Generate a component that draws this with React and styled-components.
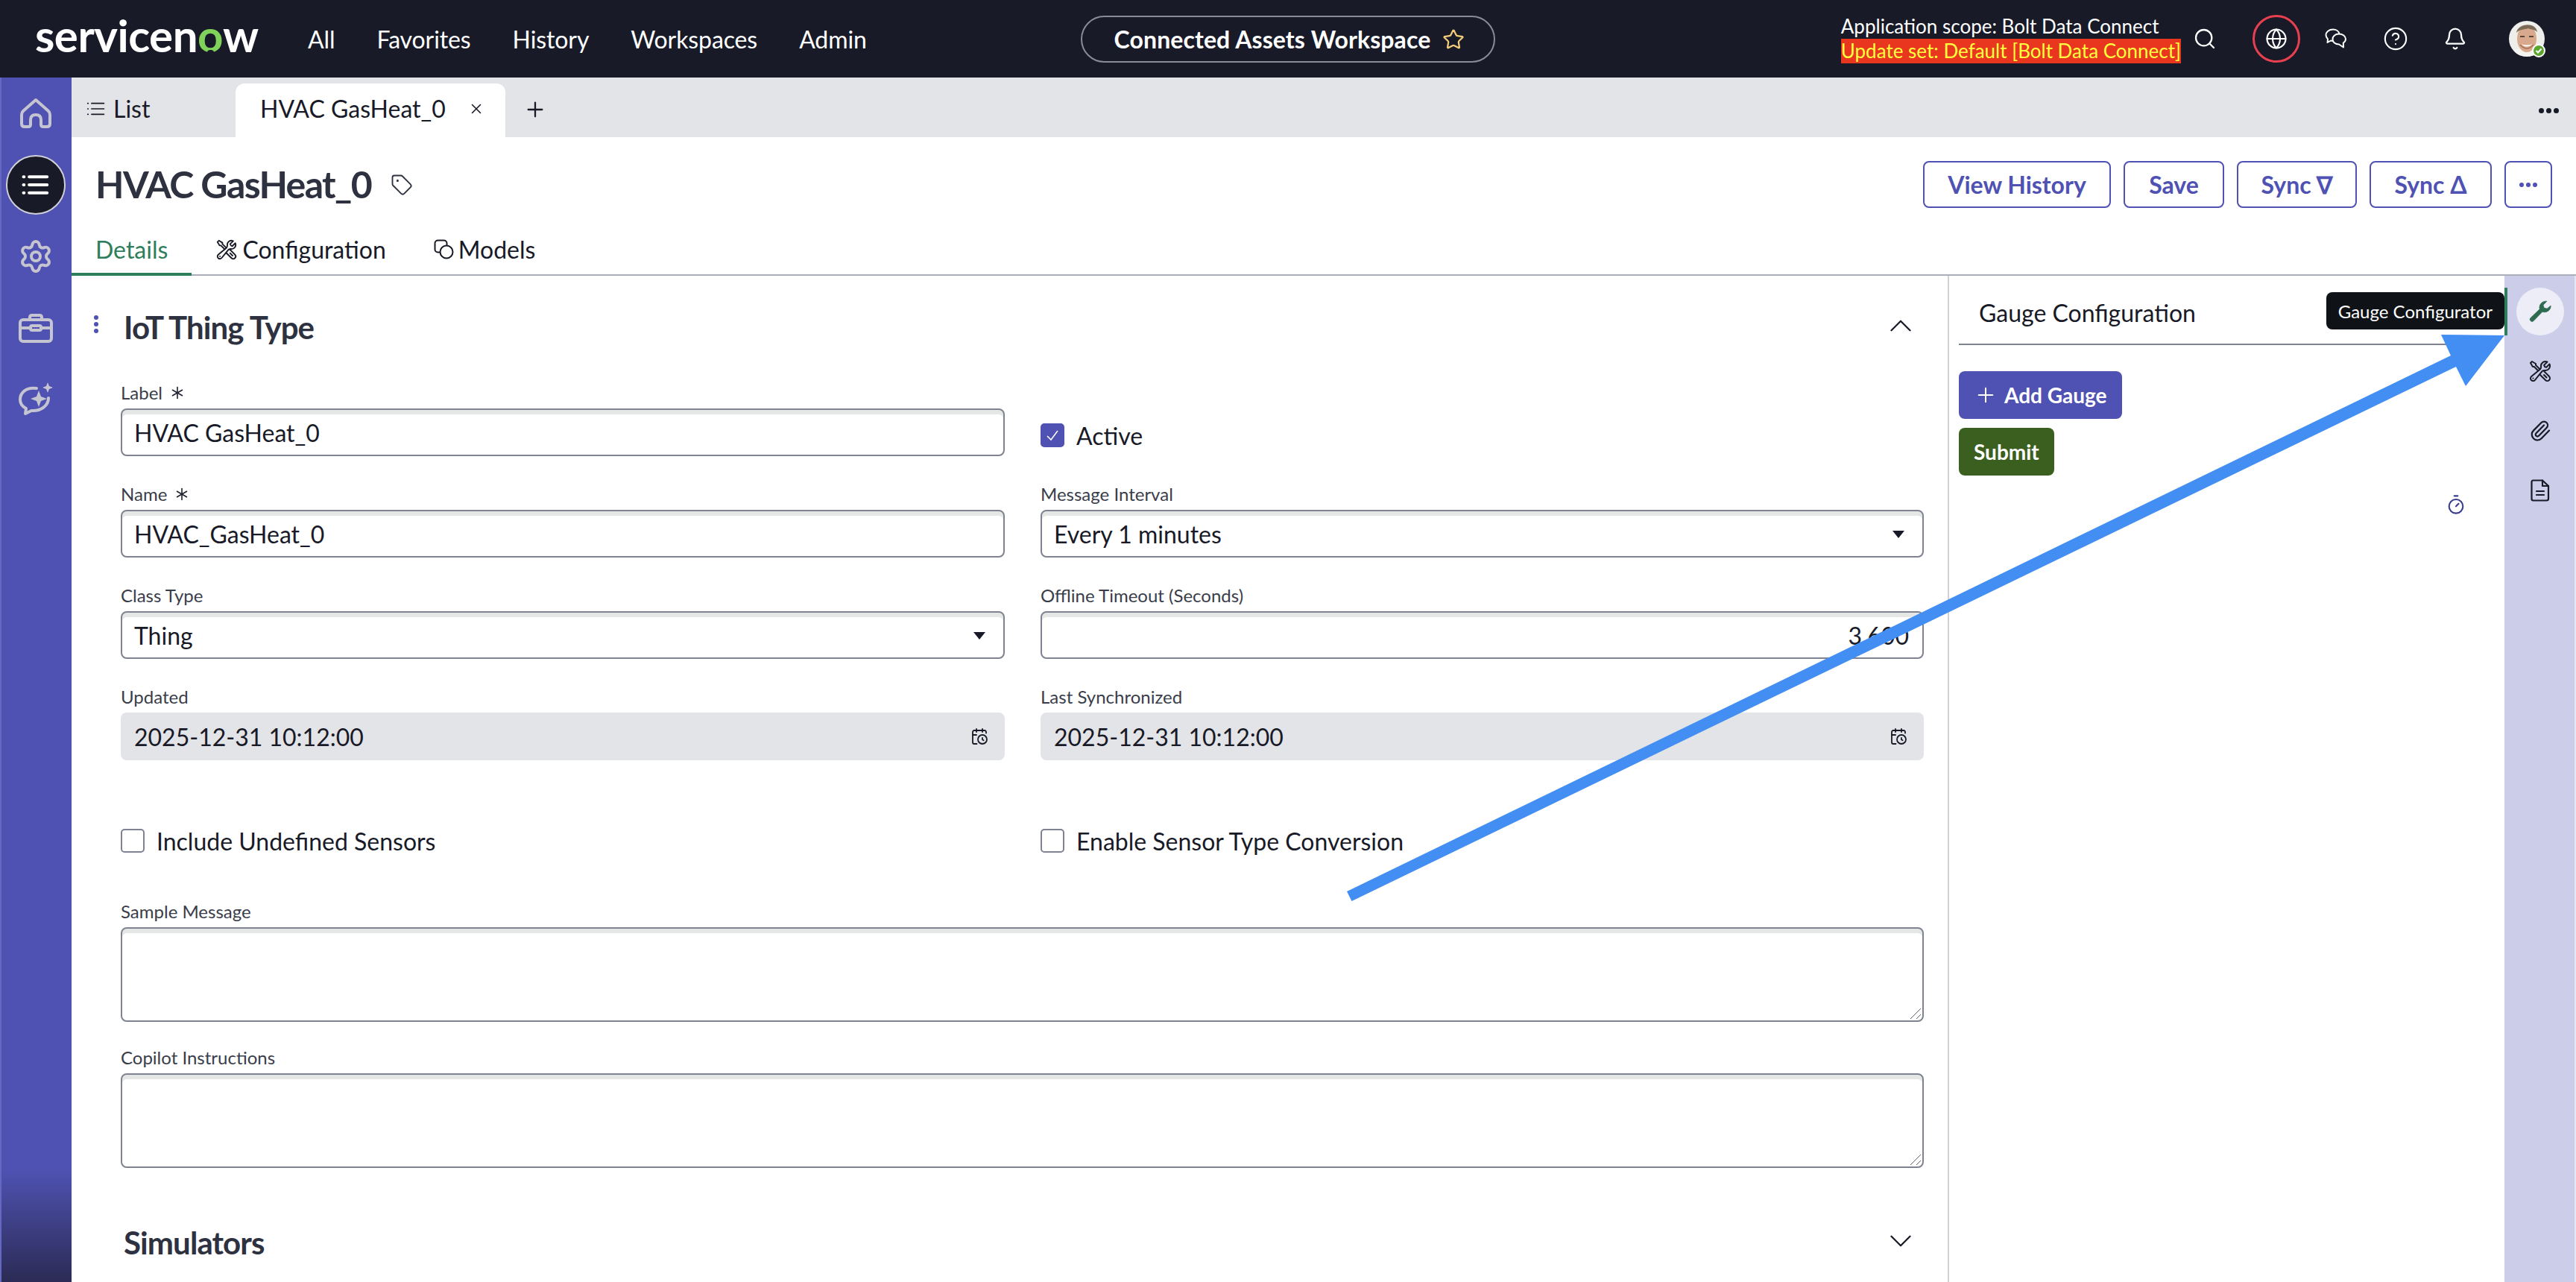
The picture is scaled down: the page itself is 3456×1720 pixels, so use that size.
import React from 'react';
import styled, { createGlobalStyle } from 'styled-components';
import {
  Asterisk,
  Bell,
  CalendarClock,
  ChevronDown,
  ChevronUp,
  CircleHelp,
  Globe,
  Paperclip,
  Plus,
  Search,
  Settings,
  Star,
  Tag,
  Timer,
  X,
} from 'lucide-react';
import { HiOutlineWrenchScrewdriver } from 'react-icons/hi2';

const GlobalStyle = createGlobalStyle`
  html, body {
    margin: 0;
    padding: 0;
    background: #fff;
    overflow: hidden;
  }
  * {
    box-sizing: border-box;
  }
  body, input, textarea, button {
    font-family: Lato, "Open Sans", sans-serif;
  }
`;

const Page = styled.div`
  position: relative;
  width: 100%;
  height: 100vh;
  display: flex;
  flex-direction: column;
  overflow: hidden;
`;

const TopBar = styled.header`
  height: 104px;
  flex: none;
  background: #181a27;
  color: #fff;
  display: grid;
  grid-template-columns: 1fr auto 1fr;
  align-items: center;
`;

const LeftGroup = styled.div`
  display: flex;
  align-items: center;
  padding-left: 47px;
`;

const Logo = styled.div`
  font-size: 60px;
  font-weight: 700;
  letter-spacing: -0.5px;
  line-height: 60px;
  width: 296px;
  margin-right: 70px;
  margin-top: -11px;
  white-space: nowrap;
`;

const LogoO = styled.span`
  position: relative;
  color: #7fd35a;

  &::after {
    content: '';
    position: absolute;
    left: 50%;
    bottom: 10px;
    width: 9px;
    height: 6px;
    margin-left: -4px;
    background: #181a27;
    border-radius: 4px 4px 0 0;
  }
`;

const Nav = styled.nav`
  display: flex;
  gap: 56px;
  font-size: 32px;
  letter-spacing: -0.1px;
`;

const WorkspacePill = styled.div`
  width: 556px;
  height: 63px;
  margin-top: 1px;
  padding-left: 4px;
  border: 2px solid #8a8b96;
  border-radius: 32px;
  display: flex;
  align-items: center;
  justify-content: center;
  gap: 16px;
  font-size: 32px;
  font-weight: 700;
  letter-spacing: 0.1px;
  color: #fff;

  svg {
    color: #f5cd79;
  }
`;

const RightGroup = styled.div`
  display: flex;
  align-items: center;
  justify-content: flex-end;
  gap: 16px;
  padding-right: 34px;
`;

const ScopeBlock = styled.div`
  display: flex;
  flex-direction: column;
  margin-right: -16px;
  font-size: 26px;
  line-height: 33px;
  white-space: nowrap;
`;

const UpdateSet = styled.span`
  background: #e8361f;
  color: #ffff3f;
`;

const IconButton = styled.div`
  width: 64px;
  height: 64px;
  flex: none;
  display: flex;
  align-items: center;
  justify-content: center;
  border-radius: 50%;
  margin-left: ${props => (props.$spaced ? '16px' : '0')};
  border: ${props => (props.$ring ? '3px solid #e8404f' : 'none')};
`;

const AvatarWrap = styled.div`
  position: relative;
  width: 48px;
  height: 48px;
  margin: 0 8px 0 24px;
`;

const AvatarBadge = styled.span`
  position: absolute;
  right: -1px;
  bottom: -1px;
  width: 18px;
  height: 18px;
  border-radius: 50%;
  background: #5aa62e;
  border: 2px solid #fff;
  display: flex;
  align-items: center;
  justify-content: center;
`;

const Body = styled.div`
  flex: 1;
  min-height: 0;
  display: flex;
`;

const SideNav = styled.aside`
  width: 96px;
  flex: none;
  background: linear-gradient(to bottom, #4f52b2 0, #4f52b2 1465px, #2b2b55 1616px);
  border-left: 2px solid #6568c0;
  display: flex;
  flex-direction: column;
  align-items: center;
  padding-top: 8px;
  color: #c4c5d0;
`;

const SideItem = styled.div`
  width: 80px;
  height: 80px;
  margin-bottom: 16px;
  margin-left: -2px;
  border-radius: 50%;
  display: flex;
  align-items: center;
  justify-content: center;
  background: ${props => (props.$active ? '#181a27' : 'transparent')};
  border: ${props => (props.$active ? '2px solid #cfd0d8' : 'none')};
  color: ${props => (props.$active ? '#fff' : '#c4c5d0')};
`;

const Main = styled.div`
  flex: 1;
  min-width: 0;
  display: flex;
  flex-direction: column;
`;

const TabBar = styled.div`
  height: 80px;
  flex: none;
  background: #e3e4e8;
  display: flex;
  align-items: flex-end;
  color: #181a27;
  font-size: 32px;
`;

const ListTab = styled.div`
  width: 220px;
  height: 80px;
  padding: 3px 0 0 20px;
  display: flex;
  align-items: center;
  gap: 10px;
`;

const OpenTab = styled.div`
  width: 362px;
  height: 72px;
  padding: 0 28px 5px 33px;
  background: #fff;
  border-radius: 12px 12px 0 0;
  display: flex;
  align-items: center;
  justify-content: space-between;
  white-space: nowrap;
`;

const AddTab = styled.div`
  height: 80px;
  margin-left: 24px;
  padding-top: 6px;
  display: flex;
  align-items: center;
`;

const TabBarMore = styled.div`
  margin-left: auto;
  height: 80px;
  padding: 8px 23px 0 0;
  display: flex;
  align-items: center;
  gap: 3px;
`;

const Dot = styled.i`
  width: ${props => props.$size || 7}px;
  height: ${props => props.$size || 7}px;
  border-radius: 50%;
  background: currentColor;
  display: block;
`;

const RecordHead = styled.div`
  height: 186px;
  flex: none;
  padding-top: 32px;
  display: flex;
  flex-direction: column;
`;

const TitleRow = styled.div`
  height: 63px;
  padding: 0 32px;
  display: flex;
  align-items: center;
  justify-content: space-between;
`;

const TitleWrap = styled.div`
  display: flex;
  align-items: center;
  gap: 26px;
  color: #2e3240;
`;

const Title = styled.h1`
  margin: 0;
  font-size: 50px;
  font-weight: 700;
  letter-spacing: -1.6px;
  line-height: 63px;
  color: #2e3240;
`;

const Actions = styled.div`
  display: flex;
  gap: 17px;
`;

const ActionButton = styled.button`
  width: ${props => props.$width}px;
  height: 63px;
  padding: 0;
  background: #fff;
  border: 2px solid #4f52b2;
  border-radius: 8px;
  color: #4f52b2;
  font-size: 32px;
  font-weight: 700;
  display: flex;
  align-items: center;
  justify-content: center;
  gap: 3px;
`;

const TabsRow = styled.div`
  height: 64px;
  margin-top: 27px;
  display: flex;
  border-bottom: 2px solid #abadb8;
`;

const Tab = styled.div`
  height: 64px;
  padding: 0 32px 3px;
  display: flex;
  align-items: center;
  gap: 6px;
  font-size: 32px;
  color: ${props => (props.$active ? '#2e7d5b' : '#181a27')};
  border-bottom: 4px solid ${props => (props.$active ? '#2e7d5b' : 'transparent')};
`;

const Content = styled.div`
  flex: 1;
  min-height: 0;
  display: flex;
`;

const FormColumn = styled.section`
  width: 2519px;
  flex: none;
  padding: 0 34px 0 66px;
  border-right: 2px solid #d0d1d6;
  overflow: hidden;
`;

const SectionHead = styled.div`
  position: relative;
  height: ${props => props.$height}px;
  display: flex;
  align-items: center;
  justify-content: space-between;
  color: #181a27;
`;

const SectionTitle = styled.h2`
  margin: 0 0 0 4px;
  font-size: 42px;
  font-weight: 700;
  letter-spacing: -0.9px;
  color: #2e3240;
`;

const DragHandle = styled.div`
  position: absolute;
  left: -36px;
  top: 53px;
  display: flex;
  flex-direction: column;
  gap: 3px;
  color: #4f52b2;
`;

const ChevronWrap = styled.div`
  width: 50px;
  height: 50px;
  margin-right: 4px;
  margin-top: -4px;
`;

const FieldGrid = styled.div`
  display: grid;
  grid-template-columns: 1186px 1185px;
  column-gap: 48px;
  grid-auto-rows: 136px;
`;

const Field = styled.div`
  display: flex;
  flex-direction: column;
`;

const FieldLabel = styled.label`
  height: 40px;
  padding-bottom: 3px;
  display: flex;
  align-items: center;
  gap: 5px;
  font-size: 24px;
  color: #3a3d4a;

  svg {
    color: #1f2230;
  }
`;

const TextInput = styled.input`
  width: 100%;
  height: 64px;
  padding: 1px 18px 0 16px;
  border: 2px solid #7f8290;
  border-radius: 8px;
  box-shadow: inset 0 6px 0 #e5e7e6;
  background: #fff;
  color: #181a27;
  font-size: 32px;
  text-align: ${props => (props.$right ? 'right' : 'left')};
  outline: none;
`;

const SelectBox = styled.div`
  height: 64px;
  padding: 1px 24px 0 16px;
  border: 2px solid #7f8290;
  border-radius: 8px;
  box-shadow: inset 0 6px 0 #e5e7e6;
  display: flex;
  align-items: center;
  justify-content: space-between;
  color: #181a27;
  font-size: 32px;
`;

const Caret = styled.i`
  width: 0;
  height: 0;
  border-left: 8px solid transparent;
  border-right: 8px solid transparent;
  border-top: 10px solid #181a27;
  display: block;
`;

const ReadOnlyBox = styled.div`
  height: 64px;
  padding: 0 22px 0 18px;
  border-radius: 8px;
  background: #e3e4e8;
  display: flex;
  align-items: center;
  justify-content: space-between;
  color: #181a27;
  font-size: 32px;
`;

const CheckRow = styled.div`
  display: flex;
  align-items: center;
  gap: 16px;
  height: 64px;
  margin-top: ${props => props.$top || 0}px;
  font-size: 32px;
  color: #181a27;
`;

const CheckBox = styled.span`
  width: 32px;
  height: 32px;
  flex: none;
  border-radius: 5px;
  display: flex;
  align-items: center;
  justify-content: center;
  background: ${props => (props.$checked ? '#4f52b2' : '#fff')};
  border: 2px solid ${props => (props.$checked ? '#4f52b2' : '#7f8290')};
`;

const WideRow = styled.div`
  display: grid;
  grid-template-columns: 1186px 1185px;
  column-gap: 48px;
  margin-top: 44px;
`;

const WideField = styled.div`
  width: 2419px;
  display: flex;
  flex-direction: column;
  margin-top: ${props => props.$top}px;
`;

const LongTextWrap = styled.div`
  position: relative;
  height: 127px;
`;

const LongText = styled.textarea`
  display: block;
  width: 100%;
  height: 127px;
  padding: 8px 16px;
  border: 2px solid #7f8290;
  border-radius: 8px;
  box-shadow: inset 0 6px 0 #e5e7e6;
  background: #fff;
  outline: none;
  resize: none;
`;

const ResizeGrip = styled.svg`
  position: absolute;
  right: 3px;
  bottom: 3px;
  width: 16px;
  height: 16px;
  pointer-events: none;
`;

const GaugePanel = styled.section`
  width: 745px;
  flex: none;
  padding: 0 16px 0 13px;
  display: flex;
  flex-direction: column;
  align-items: flex-start;
`;

const GaugeHead = styled.div`
  width: 100%;
  height: 93px;
  flex: none;
  padding: 8px 0 0 27px;
  border-bottom: 2px solid #7f8290;
  display: flex;
  align-items: center;
  font-size: 32px;
  color: #181a27;
`;

const FilledButton = styled.button`
  height: 64px;
  padding: 0 ${props => props.$pad}px;
  margin-top: ${props => props.$top}px;
  border: none;
  border-radius: 8px;
  background: ${props => props.$bg};
  color: #fff;
  font-size: 28px;
  font-weight: 700;
  display: flex;
  align-items: center;
  gap: 9px;
`;

const TimerRow = styled.div`
  width: 100%;
  margin-top: 25px;
  padding-right: 35px;
  display: flex;
  justify-content: flex-end;
  color: #3b3d8f;
`;

const Rail = styled.aside`
  position: relative;
  width: 96px;
  flex: none;
  padding-top: 16px;
  display: flex;
  flex-direction: column;
  align-items: center;
  gap: 16px;
  background: #cccde8;
  border-right: 2px solid #e6e6f3;
  color: #181a27;
`;

const RailItem = styled.div`
  width: 64px;
  height: 64px;
  border-radius: 50%;
  display: flex;
  align-items: center;
  justify-content: center;
  margin-right: -2px;
  background: ${props => (props.$active ? '#ecedf7' : 'transparent')};
  color: ${props => (props.$active ? '#2d6a4f' : '#181a27')};
`;

const RailMark = styled.span`
  position: absolute;
  left: 0;
  top: 16px;
  width: 4px;
  height: 64px;
  background: #2e7d5b;
`;

const Tooltip = styled.div`
  position: absolute;
  right: 100%;
  top: 22px;
  height: 50px;
  padding: 0 16px;
  border-radius: 8px;
  background: #0f1217;
  color: #fff;
  font-size: 24px;
  display: flex;
  align-items: center;
  white-space: nowrap;
`;

const ArrowOverlay = styled.svg`
  position: absolute;
  left: 0;
  top: 0;
  width: 3456px;
  height: 1720px;
  pointer-events: none;
`;

const navItems = ['All', 'Favorites', 'History', 'Workspaces', 'Admin'];

const leftFields = [
  { label: 'Label', required: true, value: 'HVAC GasHeat_0' },
  { label: 'Name', required: true, value: 'HVAC_GasHeat_0' },
  { label: 'Class Type', select: true, value: 'Thing' },
  { label: 'Updated', date: true, value: '2025-12-31 10:12:00' },
];

const rightFields = [
  { active: true },
  { label: 'Message Interval', select: true, value: 'Every 1 minutes' },
  { label: 'Offline Timeout (Seconds)', right: true, value: '3,600' },
  { label: 'Last Synchronized', date: true, value: '2025-12-31 10:12:00' },
];

function HomeIcon() {
  return (
    <svg width="42" height="42" viewBox="0 0 42 42" fill="none" stroke="currentColor" strokeWidth="4" strokeLinejoin="round">
      <path d="M21 3 L38 18 Q40 20 40 23 V35 Q40 39 36 39 H31 Q28 39 28 36 V30 Q28 23 21 23 Q14 23 14 30 V36 Q14 39 11 39 H6 Q2 39 2 35 V23 Q2 20 4 18 Z" />
    </svg>
  );
}

function ListLines({ size = 30, weight = 2.4 }) {
  return (
    <svg width={size} height={size} viewBox="0 0 30 30" stroke="currentColor" strokeWidth={weight} strokeLinecap="round">
      <path d="M8 6.5H27M8 15H27M8 23.5H27" />
      <path d="M2 6.5H2.6M2 15H2.6M2 23.5H2.6" />
    </svg>
  );
}

function BriefcaseIcon() {
  return (
    <svg width="46" height="40" viewBox="0 0 46 40" fill="none" stroke="currentColor" strokeWidth="4" strokeLinejoin="round">
      <rect x="2" y="9" width="42" height="29" rx="4" />
      <path d="M15 9V6Q15 3 18 3H28Q31 3 31 6V9" />
      <path d="M2 20H16M30 20H44" />
      <rect x="16" y="17" width="14" height="6" rx="2" />
    </svg>
  );
}

function CopilotIcon() {
  return (
    <svg width="46" height="46" viewBox="0 0 46 46" fill="none" stroke="currentColor" strokeWidth="4" strokeLinecap="round" strokeLinejoin="round">
      <path d="M24 8 C10 6 2 14 2 23 C2 29 6 33 10 35 L9 42 L17 38 C30 39 40 31 40 21" />
      <path fill="currentColor" stroke="none" d="M27 11 L30 19 L38 22 L30 25 L27 33 L24 25 L16 22 L24 19 Z" />
      <path fill="currentColor" stroke="none" d="M39 0 L41 5 L46 7 L41 9 L39 14 L37 9 L32 7 L37 5 Z" />
    </svg>
  );
}

function ChatIcon() {
  return (
    <svg width="30" height="28" viewBox="0 0 30 28" fill="none" stroke="#fff" strokeWidth="2" strokeLinejoin="round">
      <path d="M11 1.5C5.5 1.5 1.5 5 1.5 9C1.5 11.5 2.5 13 4 14.5L3.5 19L8 16.5C9 16.8 10 17 11 16.8" />
      <path d="M11 1.5C15.5 1.5 19 4 19.5 7.8" />
      <path d="M19 7.5C13.5 7.5 10.5 11 10.5 14.5C10.5 18.5 14 21.5 19 21.5L25 25.5L24.8 19.5C27 18 28 16.5 28 14.5C28 10.5 24 7.5 19 7.5Z" />
    </svg>
  );
}

function ModelsIcon() {
  return (
    <svg width="27" height="27" viewBox="0 0 27 27" fill="none" stroke="currentColor" strokeWidth="2">
      <rect x="1.5" y="1.5" width="16" height="16" rx="4" />
      <circle cx="17" cy="17" r="8.5" fill="#fff" />
    </svg>
  );
}

function WrenchIcon() {
  return (
    <svg width="34" height="34" viewBox="0 0 24 24" fill="currentColor" stroke="currentColor" strokeWidth="0.6" strokeLinejoin="round">
      <path d="M22 6.5a6 6 0 0 1-8 5.7L5.5 21a2 2 0 0 1-2.8-2.8l8.8-8.5A6 6 0 0 1 18.2 2.3L14.8 5.8 15.6 8.6 18.4 9.3z" />
    </svg>
  );
}

function DocIcon() {
  return (
    <svg width="26" height="30" viewBox="0 0 26 30" fill="none" stroke="currentColor" strokeWidth="2.2" strokeLinejoin="round" strokeLinecap="round">
      <path d="M3.5 1.5H16L24 9V26Q24 28.5 21.5 28.5H3.5Q1.5 28.5 1.5 26V4Q1.5 1.5 3.5 1.5Z" />
      <path d="M16 1.5V9H24" />
      <path d="M8 16H18M8 21H18" />
    </svg>
  );
}

function AvatarPhoto() {
  return (
    <svg width="48" height="48" viewBox="0 0 48 48">
      <defs>
        <clipPath id="avatar-clip">
          <circle cx="24" cy="24" r="24" />
        </clipPath>
      </defs>
      <g clipPath="url(#avatar-clip)">
        <rect width="48" height="48" fill="#eeeeea" />
        <rect x="8" y="38" width="32" height="12" fill="#f6f4f0" />
        <ellipse cx="24" cy="24" rx="13" ry="18" fill="#d8a98c" />
        <path d="M10 16 C12 3 36 1 38 15 C34 11 30 12 26 10 C20 12 14 11 10 16Z" fill="#7b6a55" />
        <rect x="15" y="20" width="6" height="2" fill="#5a4a3c" />
        <rect x="27" y="20" width="6" height="2" fill="#5a4a3c" />
        <path d="M16 31 Q24 38 32 31 Q24 34 16 31Z" fill="#fff" />
        <path d="M15 32 Q24 42 33 32" fill="none" stroke="#a86f55" strokeWidth="1.5" />
      </g>
    </svg>
  );
}

function LongField({ label, top }) {
  return (
    <WideField $top={top}>
      <FieldLabel>{label}</FieldLabel>
      <LongTextWrap>
        <LongText readOnly />
        <ResizeGrip viewBox="0 0 16 16" stroke="#5f6270" strokeWidth="1">
          <path d="M1 15L15 1M9 15L15 9" />
        </ResizeGrip>
      </LongTextWrap>
    </WideField>
  );
}

function FormField({ field }) {
  if (field.active) {
    return (
      <Field>
        <CheckRow $top={44}>
          <CheckBox $checked>
            <svg width="20" height="20" viewBox="0 0 20 20" fill="none" stroke="#fff" strokeWidth="1.5">
              <path d="M3 11L8 16L17 4" />
            </svg>
          </CheckBox>
          Active
        </CheckRow>
      </Field>
    );
  }
  return (
    <Field>
      <FieldLabel>
        {field.label}
        {field.required && <Asterisk size={30} strokeWidth={1.3} />}
      </FieldLabel>
      {field.select && (
        <SelectBox>
          {field.value}
          <Caret />
        </SelectBox>
      )}
      {field.date && (
        <ReadOnlyBox>
          {field.value}
          <CalendarClock size={24} strokeWidth={1.8} />
        </ReadOnlyBox>
      )}
      {!field.select && !field.date && (
        <TextInput readOnly defaultValue={field.value} $right={field.right} />
      )}
    </Field>
  );
}

export default function App() {
  return (
    <Page>
      <GlobalStyle />
      <TopBar>
        <LeftGroup>
          <Logo>
            servicen<LogoO>o</LogoO>w
          </Logo>
          <Nav>
            {navItems.map(item => (
              <span key={item}>{item}</span>
            ))}
          </Nav>
        </LeftGroup>
        <WorkspacePill>
          Connected Assets Workspace
          <Star size={30} strokeWidth={1.8} />
        </WorkspacePill>
        <RightGroup>
          <ScopeBlock>
            <span>Application scope: Bolt Data Connect</span>
            <UpdateSet>Update set: Default [Bolt Data Connect]</UpdateSet>
          </ScopeBlock>
          <IconButton>
            <Search size={32} strokeWidth={1.7} />
          </IconButton>
          <IconButton $ring $spaced>
            <Globe size={30} strokeWidth={1.7} />
          </IconButton>
          <IconButton>
            <ChatIcon />
          </IconButton>
          <IconButton>
            <CircleHelp size={34} strokeWidth={1.5} />
          </IconButton>
          <IconButton>
            <Bell size={32} strokeWidth={1.7} />
          </IconButton>
          <AvatarWrap>
            <AvatarPhoto />
            <AvatarBadge>
              <svg width="10" height="10" viewBox="0 0 10 10" fill="none" stroke="#fff" strokeWidth="2">
                <path d="M1.5 5L4 7.5L8.5 2.5" />
              </svg>
            </AvatarBadge>
          </AvatarWrap>
        </RightGroup>
      </TopBar>

      <Body>
        <SideNav>
          <SideItem>
            <HomeIcon />
          </SideItem>
          <SideItem $active>
            <ListLines size={38} weight={3.2} />
          </SideItem>
          <SideItem>
            <Settings size={48} strokeWidth={2} />
          </SideItem>
          <SideItem>
            <BriefcaseIcon />
          </SideItem>
          <SideItem>
            <CopilotIcon />
          </SideItem>
        </SideNav>

        <Main>
          <TabBar>
            <ListTab>
              <ListLines size={26} weight={2} />
              List
            </ListTab>
            <OpenTab>
              HVAC GasHeat_0
              <X size={22} strokeWidth={1.7} />
            </OpenTab>
            <AddTab>
              <Plus size={32} strokeWidth={1.7} />
            </AddTab>
            <TabBarMore>
              <Dot />
              <Dot />
              <Dot />
            </TabBarMore>
          </TabBar>

          <RecordHead>
            <TitleRow>
              <TitleWrap>
                <Title>HVAC GasHeat_0</Title>
                <Tag size={30} strokeWidth={1.5} />
              </TitleWrap>
              <Actions>
                <ActionButton $width={252}>View History</ActionButton>
                <ActionButton $width={135}>Save</ActionButton>
                <ActionButton $width={161}>Sync ∇</ActionButton>
                <ActionButton $width={164}>Sync Δ</ActionButton>
                <ActionButton $width={64}>
                  <Dot $size={6} />
                  <Dot $size={6} />
                  <Dot $size={6} />
                </ActionButton>
              </Actions>
            </TitleRow>
            <TabsRow>
              <Tab $active>Details</Tab>
              <Tab>
                <HiOutlineWrenchScrewdriver size={30} />
                Configuration
              </Tab>
              <Tab>
                <ModelsIcon />
                Models
              </Tab>
            </TabsRow>
          </RecordHead>

          <Content>
            <FormColumn>
              <SectionHead $height={138}>
                <DragHandle>
                  <Dot $size={6} />
                  <Dot $size={6} />
                  <Dot $size={6} />
                </DragHandle>
                <SectionTitle>IoT Thing Type</SectionTitle>
                <ChevronWrap>
                  <ChevronUp size={50} strokeWidth={1.1} />
                </ChevronWrap>
              </SectionHead>
              <FieldGrid>
                {leftFields.map((field, index) => (
                  <React.Fragment key={field.label}>
                    <FormField field={field} />
                    <FormField field={rightFields[index]} />
                  </React.Fragment>
                ))}
              </FieldGrid>
              <WideRow>
                <CheckRow>
                  <CheckBox />
                  Include Undefined Sensors
                </CheckRow>
                <CheckRow>
                  <CheckBox />
                  Enable Sensor Type Conversion
                </CheckRow>
              </WideRow>
              <LongField label="Sample Message" top={44} />
              <LongField label="Copilot Instructions" top={29} />
              <SectionHead $height={200}>
                <SectionTitle>Simulators</SectionTitle>
                <ChevronWrap>
                  <ChevronDown size={50} strokeWidth={1.1} />
                </ChevronWrap>
              </SectionHead>
            </FormColumn>

            <GaugePanel>
              <GaugeHead>Gauge Configuration</GaugeHead>
              <FilledButton $top={35} $bg="#4f52b2" $pad={20}>
                <Plus size={32} strokeWidth={1.5} />
                Add Gauge
              </FilledButton>
              <FilledButton $top={12} $bg="#3a5f1e" $pad={20}>
                Submit
              </FilledButton>
              <TimerRow>
                <Timer size={28} strokeWidth={1.8} />
              </TimerRow>
            </GaugePanel>

            <Rail>
              <RailMark />
              <Tooltip>Gauge Configurator</Tooltip>
              <RailItem $active>
                <WrenchIcon />
              </RailItem>
              <RailItem>
                <HiOutlineWrenchScrewdriver size={32} />
              </RailItem>
              <RailItem>
                <Paperclip size={30} strokeWidth={1.8} />
              </RailItem>
              <RailItem>
                <DocIcon />
              </RailItem>
            </Rail>
          </Content>
        </Main>
      </Body>

      <ArrowOverlay viewBox="0 0 3456 1720">
        <polygon
          fill="#438ef2"
          points="1807,1196 1813.5,1209 3295,492 3308,518 3360,450 3275,449 3288,477"
        />
      </ArrowOverlay>
    </Page>
  );
}
